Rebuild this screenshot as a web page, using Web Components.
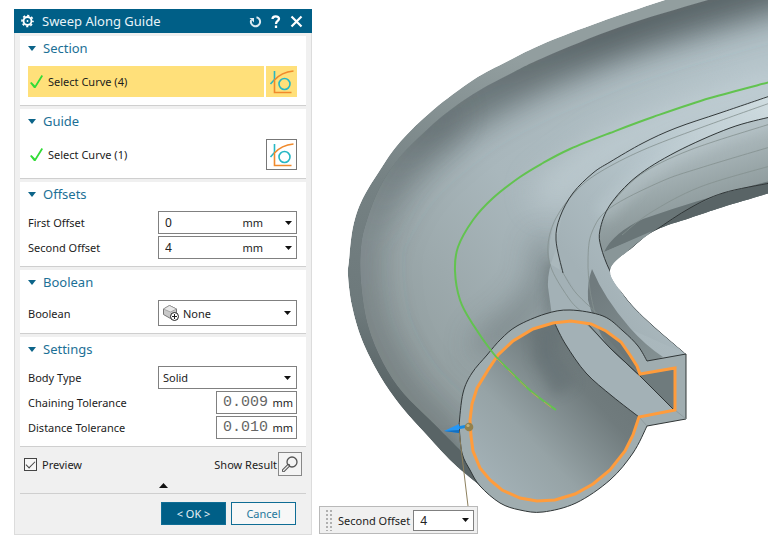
<!DOCTYPE html>
<html lang="en">
<head>
<meta charset="utf-8">
<title>Sweep Along Guide</title>
<style>
body{margin:0;background:#fff;font-family:"Noto Sans","Open Sans",sans-serif;font-size:11px;color:#1c1c1c}
</style>
</head>
<body>
<cad-workspace></cad-workspace>
<script>
const define=(name,html,setup)=>customElements.define(name,class extends HTMLElement{
  constructor(){
    super();
    const t=document.createElement('template');
    t.innerHTML='<style>*{box-sizing:border-box}button,input,select{font:inherit;color:inherit;margin:0;padding:0;border:0;background:none;border-radius:0;min-width:0}:host([hidden]){display:none}</style>'+html;
    this.attachShadow({mode:'open'}).append(t.content.cloneNode(true));
  }
  connectedCallback(){ if(setup) setup(this.shadowRoot,this); }
});
const arrow='<svg width="7" height="4" viewBox="0 0 7 4" aria-hidden="true"><path d="M0 0H7L3.500 4Z" fill="#111"/></svg>';

define('value-field',`
<style>
:host{display:flex;height:23px;border:1px solid #808080;background:#fff;align-items:center;color:#222}
input{flex:1 1 0;width:0;padding-left:6px;height:100%;outline:0;font-size:12px}
span{padding-right:17px}
span:empty{padding:0}
button{width:16px;height:100%;display:grid;place-items:center}
</style>
<input type="text"><span></span><button type="button" aria-label="Options">${arrow}</button>`,
(r,h)=>{const i=r.querySelector('input');i.value=h.getAttribute('value');i.setAttribute('aria-label',h.getAttribute('label'));r.querySelector('span').textContent=h.getAttribute('unit')||'';});

define('tolerance-field',`
<style>
:host{display:flex;height:23px;border:1px solid #808080;background:#fff;align-items:center;padding:0 3px 0 6px;width:81px}
input{flex:1 1 0;width:0;height:100%;font-family:"Liberation Mono",monospace;font-size:15px;color:#666;outline:0}
</style>
<input type="text"><span>mm</span>`,
(r,h)=>{const i=r.querySelector('input');i.value=h.getAttribute('value');i.setAttribute('aria-label',h.getAttribute('label'));});

define('choice-field',`
<style>
:host{display:grid;grid-template-columns:auto 1fr;height:23px;border:1px solid #808080;background:#fff;align-items:center;color:#222}
select{appearance:none;grid-area:1/2;height:100%;width:100%;padding-left:4px;outline:0}
.a{grid-area:1/2;justify-self:end;padding-right:5px;pointer-events:none;display:grid}
</style>
<slot></slot><select><option></option></select><span class="a">${arrow}</span>`,
(r,h)=>{r.querySelector('option').textContent=h.getAttribute('value');r.querySelector('select').setAttribute('aria-label',h.getAttribute('label'));});

define('panel-section',`
<style>
:host{display:block;background:#fff;border-bottom:1px solid #cfcfcf;padding:0 9px 7px 8px}
h2{margin:0 0 4px;font-size:13px;font-weight:400;color:#1c7096}
h2 button{display:flex;align-items:center;gap:7px;line-height:25px;height:25px;width:100%;text-align:left}
.b{display:grid;gap:2px}
h2 span{flex:1}
</style>
<h2><button type="button" aria-expanded="true"><svg width="8" height="5" viewBox="0 0 8 5"><path d="M0 0H8L4 5Z" fill="#0c6489"/></svg><span></span></button></h2>
<div class="b"><slot></slot></div>`,
(r,h)=>{r.querySelector('span').textContent=h.getAttribute('heading');});

define('form-row',`
<style>
:host{display:grid;grid-template-columns:130px 1fr;align-items:center}
:host([tight]){grid-template-columns:1fr auto}
:host([tall]){margin-top:1px}
</style>
<label></label><slot></slot>`,
(r,h)=>{r.querySelector('label').textContent=h.getAttribute('label');});

define('curve-picker',`
<style>
:host{display:flex;gap:2px;height:31px;margin:1px 0}
.pick{flex:1;display:flex;align-items:center;gap:5px;padding-left:2px;text-align:left}
.rule{width:31px;display:grid;place-items:center;border:1px solid #777}
:host([active]) button{background:#ffe07a}
:host([active]) .rule{border-color:#ffe07a}
</style>
<button class="pick" type="button"><svg width="13" height="13" viewBox="0 0 13 13"><path d="M0 8 1.500 7 5 10.500 11.500 0 13 1 5.500 13H4Z" fill="#32dc37"/></svg><span></span></button>
<button class="rule" type="button" aria-label="Curve rule"><svg width="25" height="25" viewBox="0 0 25 25" fill="none" stroke-width="1.600"><path d="M5.500 2V10.500L1.500 15" stroke="#27b7c4"/><path d="M24.500 2C15 3 9 7 5.500 11V23.500H22.500" stroke="#f08a2c"/><circle cx="15.500" cy="15" r="5.500" stroke="#27b7c4"/></svg></button>`,
(r,h)=>{r.querySelector('span').textContent=h.getAttribute('label');});

define('title-bar',`
<style>
:host{display:flex;align-items:center;height:24px;background:#005f87;color:#e8f3f8;padding:0 9px 0 7px}
h1{flex:1;margin:0 0 0 8px;font-size:13px;font-weight:400;line-height:24px}
button{display:grid;place-items:center;height:20px}
.t{display:flex;gap:9px}
</style>
<svg width="13" height="14" viewBox="0 0 14 14" fill="none" stroke="#fff"><circle cx="7" cy="7" r="4.300" stroke-width="2"/><circle cx="7" cy="7" r="5.900" stroke-width="1.800" stroke-dasharray="2.300 2.330" stroke-dashoffset="1.100"/><circle cx="7" cy="7" r="1" fill="#fff" stroke="none"/></svg>
<h1>Sweep Along Guide</h1>
<div class="t">
<button type="button" aria-label="Reset"><svg width="13" height="13" viewBox="0 0 13 13" fill="none" stroke="#dceaf1" stroke-width="2"><path d="M7.500 2.200A4.600 4.600 0 1 1 2.200 5"/><path d="M0.500 3H5V7.500Z" fill="#dceaf1" stroke="none"/></svg></button>
<button type="button" aria-label="Help"><svg width="10" height="13" viewBox="0 0 10 13" fill="none" stroke="#fff" stroke-width="2.300"><path d="M1.500 4C1.500 0.500 8 0.500 8 3.800 8 6 5 6 5 9"/><path d="M5 10.500V13"/></svg></button>
<button type="button" aria-label="Close"><svg width="13" height="13" viewBox="0 0 13 13" stroke="#fff" stroke-width="2.200"><path d="M1.500 1.500 11.500 11.500M11.500 1.500 1.500 11.500"/></svg></button>
</div>`);

define('sweep-dialog',`
<style>
:host{display:block;background:#f0f0f0;box-shadow:inset 0 0 0 1px #dcdcdc}
.c{display:grid;gap:3px;padding:3px 6px 0}
.p{display:flex;align-items:center;margin-top:2px;padding:0 4px;height:24px}
.p label{display:flex;align-items:center;gap:5px;flex:1}
input{appearance:none;width:13px;height:13px;border:1px solid #444;background:#f6f6f6;display:grid;place-items:center}
input:checked::after{content:"";width:8px;height:4px;border:solid #444;border-width:0 0 1px 1px;transform:translateY(-1px) rotate(-45deg)}
.m{width:24px;height:24px;border:1px solid #888;background:#f4f4f4;display:grid;place-items:center;margin-left:1px}
.u{display:grid;place-items:center;width:100%;height:20px}
.u svg{margin-bottom:1px}
.f{border-top:1px solid #cfcfcf;display:flex;justify-content:flex-end;gap:5px;padding:8px 10px 10px}
.f button{width:65px;height:23px;border:1px solid #0f6d95;color:#25779c;background:#f7f7f7}
.f .ok{background:#005f87;color:#e6f1f6}
</style>
<title-bar></title-bar>
<div class="c">
<panel-section heading="Section"><curve-picker active label="Select Curve (4)"></curve-picker></panel-section>
<panel-section heading="Guide"><curve-picker label="Select Curve (1)"></curve-picker></panel-section>
<panel-section heading="Offsets">
<form-row label="First Offset"><value-field label="First Offset" value="0" unit="mm"></value-field></form-row>
<form-row label="Second Offset"><value-field label="Second Offset" value="4" unit="mm"></value-field></form-row>
</panel-section>
<panel-section heading="Boolean">
<form-row tall label="Boolean"><choice-field label="Boolean" value="None" style="height:26px"><svg style="margin-left:4px" width="16" height="16" viewBox="0 0 16 16"><path d="M0.500 4 6.500 0.500 13.500 4V10L7.500 13.500 0.500 9.500Z" fill="#c9c9c9" stroke="#777"/><path d="M0.500 4 7.500 7 13.500 4 6.500 0.500Z" fill="#e8e8e8" stroke="#888" stroke-width=".6"/><circle cx="11.500" cy="11.500" r="4" fill="#fff" stroke="#222"/><path d="M9 11.500H14M11.500 9V14" stroke="#222"/></svg></choice-field></form-row>
</panel-section>
<panel-section heading="Settings">
<form-row label="Body Type"><choice-field label="Body Type" value="Solid"></choice-field></form-row>
<form-row tight label="Chaining Tolerance"><tolerance-field label="Chaining Tolerance" value="0.009"></tolerance-field></form-row>
<form-row tight label="Distance Tolerance"><tolerance-field label="Distance Tolerance" value="0.010"></tolerance-field></form-row>
</panel-section>
<div>
<div class="p"><label><input type="checkbox" checked>Preview</label><span>Show Result</span><button class="m" type="button" aria-label="Show Result"><svg width="16" height="16" viewBox="0 0 16 16" fill="none" stroke="#555"><circle cx="10" cy="6" r="5" stroke-width="1.300"/><path d="M6.500 9.500 1.500 14.500" stroke-width="3.200" stroke-linecap="round"/><path d="M6 10 1.500 14.500" stroke="#eee" stroke-width="1.200" stroke-linecap="round"/></svg></button></div>
<button class="u" type="button" aria-label="Collapse"><svg width="9" height="5" viewBox="0 0 9 5"><path d="M0 5H9L4.500 0Z" fill="#111"/></svg></button>
<div class="f" style="margin-top:-3px"><button class="ok" type="button">&lt; OK &gt;</button><button type="button">Cancel</button></div>
</div>
</div>`);

define('offset-toolbar',`
<style>
:host{display:flex;align-items:center;height:28px;width:159px;padding:0 3px 0 5px;background:#f0f0f0;border:1px solid #b9b9b9}
i{width:8px;height:22px;background:radial-gradient(circle,#b0b0b0 1px,transparent 1px) 0 0/4px 4px;margin-right:5px}
value-field{flex:1;height:21px;margin-left:3px}
</style>
<i></i><label>Second Offset</label><value-field label="Second Offset" value="4"></value-field>`);

/* Smooth path through a list of x,y points (Catmull-Rom converted to Beziers). */
const curve=(str)=>{
  const p=str.trim().split(/\s+/).map(s=>s.split(',').map(Number));
  let d='M'+p[0];
  for(let i=0;i<p.length-1;i++){
    const a=p[i-1]||p[i],b=p[i],c=p[i+1],e=p[i+2]||c;
    d+='C'+[b[0]+(c[0]-a[0])/6,b[1]+(c[1]-a[1])/6,c[0]-(e[0]-b[0])/6,c[1]-(e[1]-b[1])/6,c[0],c[1]].map(v=>v.toFixed(1)).join(' ');
  }
  return d;
};
const tail=d=>d.replace(/^M/,'L');
const silh='770,-34 665,0 600,22 545,43 508,61 473,80 433,110 400,142 380,170 362,200 353,227 349,260 348,276 352,306 362,340 380,376 400,405 423,431 453,463 480,486';
const lip='800,-26 708,0 620,27 545,57 510,74 480,90 453,108 430,127 400,157 380,187 367,220 361,247 361,283 368,326 383,363 403,393 430,420 463,453';
const inner='686,354 650,323 626,298 610,270 633,247 656,230 690,218 723,207 770,193';
const lineA='770,96 720,113 676,128 643,143 610,162 593,173 573,193 560,217 556,240 563,273';
const lineB='770,117 730,128 676,152 636,177 610,205 600,230 601,247 610,271 626,298 650,323 686,354';
const lineC='770,183 723,193 690,208 656,230 633,247 610,270';
const guide='770,82 710,98 653,117 610,133 570,149 543,163 520,177 493,198 473,220 458,247 455,271 460,300 472,323 493,353 510,371 532,392 556,410';
const ringTop='459,425 463,393 472,373 487,355 501,339 517,326 545,314 570,310 603,316 623,331 638,346 647,361';
const ringBot='647,426 633,453 610,480 576,503 543,512 520,510 500,503 480,486 470,470 462,453 459,425';
const ring=curve(ringBot)+tail(curve(ringTop))+'L686 354V419Z';
const orange='M675 368 640 374 637 366 630 355 621 342 606 331 591 324 571 321 553 323 533 329 513 341 498 355 488 370 477 388 472 404 470 420 471 436 473 451 480 468 490 480 502 490 520 498 537 501 555 500 575 494 593 484 610 470 625 451 633 435 639 417 675 410Z';
const body=curve(silh)+'L647 426 686 354'+tail(curve(inner))+'L770 -34Z';
const inside=curve(lip)+'L540 440 686 354'+tail(curve(inner))+'Z';

define('model-view',`
<style>:host{display:block}svg{display:block;width:100%;height:auto}</style>
<svg viewBox="312 0 456 548" role="img" aria-label="Swept tube with guide curve" fill="none">
<defs>
<clipPath id="b"><path d="${body}"/></clipPath><clipPath id="i"><path d="${inside}"/></clipPath><clipPath id="o"><path d="${orange}"/></clipPath>
<filter id="f6" filterUnits="userSpaceOnUse" x="250" y="-100" width="600" height="700"><feGaussianBlur stdDeviation="6"/></filter>
<filter id="f18" filterUnits="userSpaceOnUse" x="250" y="-100" width="600" height="700"><feGaussianBlur stdDeviation="16"/></filter>
<linearGradient id="lg" gradientUnits="userSpaceOnUse" x1="520" y1="60" x2="400" y2="400"><stop offset="0" stop-color="#929e9f"/><stop offset=".45" stop-color="#758183"/><stop offset=".8" stop-color="#6d797b"/><stop offset="1" stop-color="#596466"/></linearGradient>
<linearGradient id="bg" gradientUnits="userSpaceOnUse" x1="380" y1="360" x2="740" y2="60"><stop offset="0" stop-color="#909c9d"/><stop offset=".45" stop-color="#a9b7bc"/><stop offset="1" stop-color="#b3c2c8"/></linearGradient>
<linearGradient id="sh" gradientUnits="userSpaceOnUse" x1="365" y1="230" x2="600" y2="30"><stop offset="0" stop-color="#4a5557" stop-opacity=".1"/><stop offset=".4" stop-color="#4a5557" stop-opacity=".6"/><stop offset="1" stop-color="#465052" stop-opacity=".8"/></linearGradient>
<linearGradient id="ig" gradientUnits="userSpaceOnUse" x1="490" y1="480" x2="610" y2="370"><stop offset="0" stop-color="#a2b0b5"/><stop offset=".35" stop-color="#96a3a6"/><stop offset=".8" stop-color="#707b7d"/><stop offset="1" stop-color="#6c7779"/></linearGradient>
<linearGradient id="bd" gradientUnits="userSpaceOnUse" x1="570" y1="260" x2="770" y2="110"><stop offset="0" stop-color="#a3b1b6"/><stop offset=".5" stop-color="#b6c5cb"/><stop offset="1" stop-color="#cfdce0"/></linearGradient>
<linearGradient id="wd" gradientUnits="userSpaceOnUse" x1="590" y1="290" x2="655" y2="355"><stop offset="0" stop-color="#707b7e"/><stop offset="1" stop-color="#828f91"/></linearGradient>
<linearGradient id="rb" gradientUnits="userSpaceOnUse" x1="680" y1="150" x2="700" y2="215"><stop offset="0" stop-color="#afbcc0"/><stop offset=".6" stop-color="#98a5a7"/><stop offset="1" stop-color="#8b9799"/></linearGradient>
</defs>
<g clip-path="url(#b)">
<path d="${body}" fill="url(#lg)"/>
<g clip-path="url(#i)">
<path d="${inside}" fill="url(#bg)"/>
<path d="${curve(lip)}" stroke="url(#sh)" stroke-width="62" filter="url(#f18)"/>
<path d="M453 108 430 127 400 157 380 187 367 220 361 247 361 283 368 326 403 393 463 453" stroke="#566163" stroke-width="20" opacity=".55" filter="url(#f18)"/>
<path d="M545 240 548 282 520 318 478 350" stroke="#515b5d" stroke-width="20" opacity=".6" filter="url(#f18)"/>
<path d="M554 262 550 320" stroke="#515b5d" stroke-width="12" opacity=".45" filter="url(#f6)"/>
<path d="M440 440 465 465" stroke="#5b6668" stroke-width="14" opacity=".6" filter="url(#f6)"/>
<path d="M790 82 690 113 610 147 540 200" stroke="#d0dde2" stroke-width="26" opacity=".6" filter="url(#f18)"/>
</g>
<path d="${curve(lineA)}L592 312 686 354${tail(curve(lineB.split(' ').reverse().join(' ')))}Z" fill="url(#bd)"/>
<path d="M558 246Q547 268 548 287L552 316 596 313 578 295 563 273Z" fill="#a3b1b6"/>
<path d="M564 206Q545 235 550 264L560 270 557 240Z" fill="#acbabf" opacity=".7"/>
<path d="${curve(lineB)}L610 270${tail(curve(lineC.split(' ').reverse().join(' ')))}Z" fill="url(#rb)"/>
<path d="M770 118 730 129 676 153 640 177 600 215" stroke="#c5d3d8" stroke-width="20" opacity=".28" filter="url(#f6)"/>
<path d="M604 252Q613 233 643 219 703 198 770 181V197L723 208 690 219 656 231 633 240Z" fill="#697577"/>
<path d="M770 183 723 193 690 208 656 230 690 219 770 196Z" fill="#596466"/>
<path d="M604 252 652 231 633 247 610 270Z" fill="#899698"/>
<path d="M592 269Q587 282 588 300L592 314 647 363 663 357Q645 345 630 328 604 298 592 269Z" fill="url(#wd)"/>
<g stroke="#84918f" stroke-width=".8">
<path d="${curve('770,103 700,128 643,150 600,172 576,191 556,218 548,245 552,270 570,300 582,312')}"/>
<path d="${curve('770,124 690,150 640,175 610,205')}"/>
<path d="${curve('770,147 700,168 660,182 610,208 592,232 588,260 590,290 595,314')}"/>
<path d="${curve('770,166 700,187 650,213 622,235')}"/>
<path d="${curve('563,273 576,293 600,316')}"/>
</g>
<path d="${curve(lineA)}" stroke="#343a3b"/>
<path d="${curve(lineB)}${curve(lineC)}" stroke="#303637"/>
</g>
<path d="${ring}" fill="#a0adb0" stroke="#303637"/>
<g clip-path="url(#o)">
<path d="${orange}" fill="url(#ig)"/>
<path d="M548 322 545 355 565 390" stroke="#657174" stroke-width="24" opacity=".65" filter="url(#f6)"/>
<path d="M554 318${tail(curve('555,324 566,345 586,373 612,396 639,417'))}L675 411 640 376 610 348 586 322Z" fill="#a3b1b6" stroke="#303637"/>
<path d="M586 322 598 328 640 374 678 366V412L640 376 610 348Z" fill="#6f7b7d"/>
<path d="M584 322 598 328Q604 344 616 353L610 348Z" fill="#8b989b"/>
<path d="M586 322 610 348 640 376 675 411" stroke="#303637"/>
</g>
<path d="M639 417 647 426M675 410 686 419" stroke="#879396" stroke-width=".7"/>
<path d="${orange}" stroke="#ff9c3c" stroke-width="3"/>
<path d="${curve(guide)}" stroke="#62c34f" stroke-width="2"/>
<path d="M497 359 510 372 532 393 553 409" stroke="#c09b62" stroke-width="1" stroke-dasharray="9 7"/>
<path d="M459 431 468 506" stroke="#8d805d"/>
<path d="M468 426 457 428" stroke="#168be5" stroke-width="3"/><path d="M444 431 459 424V433Z" fill="#2697f5"/><path d="M444 431 459 430V433Z" fill="#126fc1"/>
<circle cx="469" cy="427" r="4.300" fill="#93814d"/><circle cx="468" cy="425.500" r="1.600" fill="#c0b27f"/>
</svg>`);

define('cad-workspace',`
<style>
:host{display:flex;align-items:flex-start;overflow:hidden}
sweep-dialog{flex:0 0 298px;margin:9px 0 0 14px}
.v{flex:1;min-width:0;position:relative}
offset-toolbar{position:absolute;left:7px;top:506px}
</style>
<sweep-dialog></sweep-dialog>
<div class="v"><model-view></model-view><offset-toolbar></offset-toolbar></div>`);
</script>
</body>
</html>
